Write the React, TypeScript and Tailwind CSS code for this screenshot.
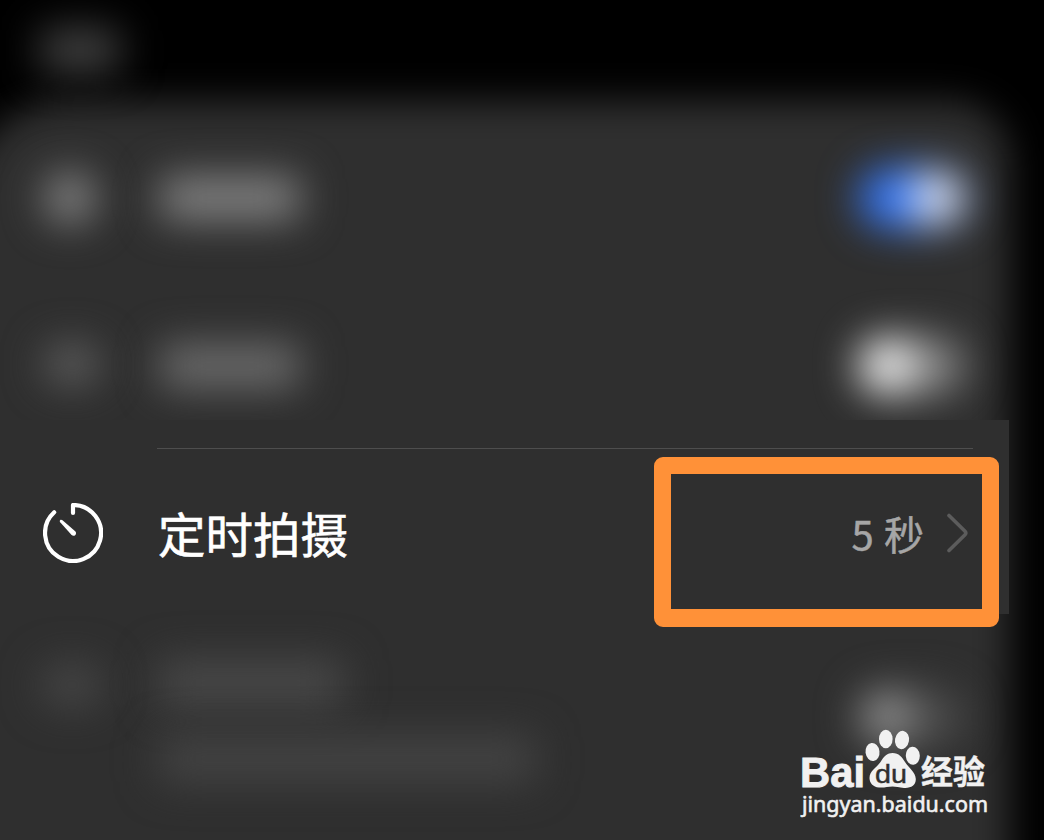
type ToggleTone = "on" | "off" | "dim";

const TimerIcon = () => (
  <svg viewBox="0 0 60 60" className="size-15 shrink-0 -translate-y-px" fill="none">
    <path
      d="M30 10V2A28 28 0 1 1 11.2 9.3"
      stroke="white"
      strokeWidth="4.2"
      strokeLinecap="round"
      strokeLinejoin="round"
    />
    <path
      d="M17.1 17.2C17.8 16.5 18.7 16.7 19.5 17.3L32.2 28.2C34.6 30.6 31.4 34.4 28.6 32.1L17.2 19.3C16.7 18.6 16.6 17.8 17.1 17.2Z"
      fill="white"
    />
  </svg>
);

const ChevronIcon = () => (
  <svg viewBox="0 0 22 40" className="h-10 w-5.5" fill="none">
    <path
      d="M2 2.5L18 18.3Q19.6 20 18 21.7L2 37.5"
      stroke="#5c5c5c"
      strokeWidth="3.6"
      strokeLinecap="round"
    />
  </svg>
);

const BlurredToggle = ({ tone }: { tone: ToggleTone }) => {
  if (tone === "on") {
    return (
      <div className="flex h-15 w-27 justify-end rounded-full bg-[#3679fa] p-1 blur-[20px]">
        <div className="size-13 rounded-full bg-[#e8ebf5]" />
      </div>
    );
  }
  if (tone === "off") {
    return (
      <div className="flex h-15 w-27 rounded-full bg-[#848484] p-0.5 blur-[20px]">
        <div className="size-14 rounded-full bg-[#f4f4f4]" />
      </div>
    );
  }
  return (
    <div className="flex h-15 w-27 rounded-full bg-[#4b4b4b] p-1 blur-[20px]">
      <div className="size-13 rounded-full bg-[#929292]" />
    </div>
  );
};

const Watermark = () => (
  <svg
    viewBox="0 0 190 94"
    className="absolute top-[727px] left-[800px] h-[94px] w-[190px]"
    fill="#f1f1f1"
  >
    <text
      x="0"
      y="59.6"
      fontFamily="'Liberation Sans', sans-serif"
      fontSize="42.5"
      fontWeight="700"
      stroke="#f1f1f1"
      strokeWidth="0.9"
      textLength="65"
      lengthAdjust="spacingAndGlyphs"
    >
      Bai
    </text>

    {/* Paw */}
    <ellipse cx="72.5" cy="25" rx="7" ry="9" transform="rotate(-7 72.5 25)" />
    <ellipse cx="85.8" cy="12" rx="6.8" ry="9.3" />
    <ellipse cx="102" cy="13" rx="7" ry="9.2" transform="rotate(10 102 13)" />
    <ellipse cx="112.8" cy="28.7" rx="7" ry="9" transform="rotate(-4 112.8 28.7)" />
    <path d="M92.5 26C99 26 102 30 105 35C109 41 115.5 45 115.8 52C116 58 111 61.5 104 61C99 60.5 96 59.5 92.5 59.5C88 59.5 84 61 79 60.5C73 60 69.5 56 69.5 51C69.5 43.5 76.5 41 80.5 35C84 29 87.5 26 92.5 26Z" />
    <text
      x="75"
      y="55.5"
      fill="#303030"
      stroke="#303030"
      strokeWidth="0.4"
      fontFamily="'Liberation Sans', sans-serif"
      fontSize="26"
      textLength="32"
      lengthAdjust="spacingAndGlyphs"
    >
      du
    </text>
    <text
      x="121"
      y="56.5"
      fontFamily="'Noto Sans CJK SC', sans-serif"
      fontSize="32.5"
      fontWeight="700"
      stroke="#f1f1f1"
      strokeWidth="0.4"
      textLength="64"
      lengthAdjust="spacingAndGlyphs"
    >
      经验
    </text>
    <text
      x="2"
      y="84.5"
      fontFamily="'Noto Sans', sans-serif"
      fontSize="21.5"
      fontWeight="400"
      stroke="#f1f1f1"
      strokeWidth="0.6"
      textLength="186"
      lengthAdjust="spacingAndGlyphs"
    >
      jingyan.baidu.com
    </text>
  </svg>
);

const App = () => {
  return (
    <div className="relative h-[840px] w-[1044px] overflow-hidden bg-black font-['Noto_Sans_CJK_SC',sans-serif]">
      {/* Out of focus panel behind the list */}
      <div className="absolute top-[101px] -left-10 h-[800px] w-[1050px] rounded-tl-[110px] rounded-tr-[60px] bg-[#2f2f2f] blur-[18px]" />

      <div className="relative flex h-full w-[1009px] flex-col">
        <header className="flex h-[112px] shrink-0 items-start pt-7 pl-10">
          <div className="h-11 w-20 rounded-lg bg-[#424242] blur-[20px]" />
        </header>

        <div className="flex h-[171px] shrink-0 items-center pr-[42px] pl-[44px]">
          <div className="size-13 rounded-full bg-[#868686] blur-[20px]" />
          <div className="ml-[64px] h-11 w-[140px] rounded-lg bg-[#828282] blur-[20px]" />
          <div className="ml-auto">
            <BlurredToggle tone="on" />
          </div>
        </div>

        <div className="flex h-[165px] shrink-0 items-center pr-[44px] pl-[44px]">
          <div className="-mt-1 h-10 w-14 rounded-full bg-[#606060] blur-[20px]" />
          <div className="ml-[60px] h-11 w-[140px] rounded-lg bg-[#6c6c6c] blur-[20px]" />
          <div className="ml-auto">
            <BlurredToggle tone="off" />
          </div>
        </div>

        {/* Timer row, the only one in focus */}
        <div className="relative -mt-7 ml-px h-[194px] shrink-0 bg-[#2f2f2f] pt-7">
          <div className="mr-[36px] ml-[156px] h-px bg-[#4e4e4e]" />
          <div className="flex h-[170px] items-center pl-[42px]">
            <TimerIcon />
            <span className="ml-[55px] -translate-y-px text-[47.5px] leading-none text-white [-webkit-text-stroke:0.6px_white]">
              定时拍摄
            </span>
            <div className="mr-[10.5px] ml-auto flex h-[170px] w-[345px] translate-y-2 items-center justify-end rounded-[9px] border-t-[17px] border-r-[17px] border-b-[18px] border-l-[17px] border-[#ff9138] pr-[13px]">
              <div className="flex -translate-y-[9px] items-center gap-5.5">
                <span className="text-[40px] leading-none tracking-[0.6px] text-[#a6a6a6] [-webkit-text-stroke:0.5px_#a6a6a6]">
                  5 秒
                </span>
                <ChevronIcon />
              </div>
            </div>
          </div>
        </div>

        <div className="flex grow pt-[45px] pr-[44px] pl-[40px]">
          <div className="mt-1 h-11 w-16 rounded-full bg-[#464646] blur-[20px]" />
          <div className="ml-[54px]">
            <div className="h-12 w-[186px] rounded-lg bg-[#484848] blur-[20px]" />
            <div className="mt-7 h-12 w-[378px] rounded-lg bg-[#434343] blur-[20px]" />
          </div>
          <div className="mt-7 ml-auto">
            <BlurredToggle tone="dim" />
          </div>
        </div>
      </div>

      <Watermark />
    </div>
  );
};

export default App;
